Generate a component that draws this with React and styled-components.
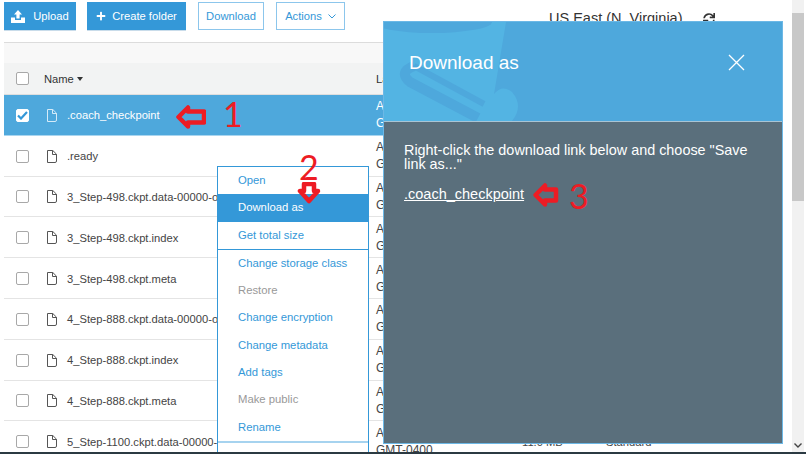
import React from 'react';
import styled, { createGlobalStyle } from 'styled-components';
import { FaPlus, FaSync } from 'react-icons/fa';

const GlobalStyle = createGlobalStyle`
  html, body {
    margin: 0;
    padding: 0;
    background: #fff;
    overflow: hidden;
  }
  * {
    box-sizing: border-box;
  }
`;

const blue = '#3498d8';
const rowBlue = '#4ea8dc';
const red = '#ed1c24';

const Page = styled.div`
  width: 806px;
  height: 454px;
  display: flex;
  flex-direction: column;
  font-family: 'Liberation Sans', Arial, sans-serif;
  font-size: 11.2px;
  color: #444;
`;

const Body = styled.div`
  flex: 1;
  min-height: 0;
  display: flex;
  position: relative;
  overflow: hidden;
`;

const BottomEdge = styled.div`
  height: 2px;
  background: #2b3a42;
`;

const Main = styled.div`
  width: 783px;
  padding-left: 4px;
`;

const Toolbar = styled.div`
  height: 43px;
  padding-top: 2px;
  display: flex;
  align-items: flex-start;
  border-bottom: 1px solid #dcdcdc;
`;

const ToolButton = styled.div`
  height: 28px;
  width: ${(p) => p.$width}px;
  margin-right: ${(p) => p.$gap}px;
  display: flex;
  align-items: center;
  justify-content: center;
  gap: ${(p) => p.$iconGap || 6}px;
  color: ${(p) => (p.$primary ? '#fff' : blue)};
  background: ${(p) => (p.$primary ? blue : '#fff')};
  border: ${(p) => (p.$primary ? 'none' : '1px solid #8cc6ec')};
  box-shadow: ${(p) => (p.$primary ? '0 1px 0 #c9dcea' : 'none')};
`;

const Region = styled.div`
  margin-left: 204px;
  padding-top: 8px;
  font-size: 14.5px;
  color: #333;
  white-space: nowrap;
  display: flex;
  align-items: flex-start;
  gap: 20px;
  svg {
    margin-top: 3px;
  }
`;

const FilterBand = styled.div`
  height: 20px;
  background: #f8f8f8;
`;

const HeaderRow = styled.div`
  height: 32px;
  display: grid;
  grid-template-columns: 40px 332px 146px 84px 1fr;
  align-items: center;
  background: #f2f3f3;
  border-bottom: 1px solid #dedede;
  color: #333;
`;

const Row = styled.div`
  height: 40.8px;
  padding-top: 1px;
  display: grid;
  grid-template-columns: 40px 332px 146px 84px 1fr;
  align-items: center;
  white-space: nowrap;
  overflow: hidden;
  color: ${(p) => (p.$selected ? '#fff' : '#444')};
  background: ${(p) => (p.$selected ? rowBlue : '#fff')};
  border-bottom: 1px solid ${(p) => (p.$selected ? '#a9d5ef' : '#e4e4e4')};
`;

const CheckCell = styled.div`
  padding-left: 12px;
  display: flex;
`;

const Check = styled.div`
  width: 13px;
  height: 13px;
  background: #fff;
  border: 1px solid ${(p) => (p.$on ? '#fff' : '#a8a8a8')};
  border-radius: 2px;
  display: flex;
  align-items: center;
  justify-content: center;
`;

const NameCell = styled.div`
  display: flex;
  align-items: center;
  gap: 10px;
  padding-left: 2px;
`;

const SortLabel = styled.div`
  display: flex;
  align-items: center;
  gap: 3px;
`;

const SortCaret = styled.span`
  width: 0;
  height: 0;
  border-left: 3.5px solid transparent;
  border-right: 3.5px solid transparent;
  border-top: 4px solid #333;
`;

const DateCell = styled.div`
  font-size: 12px;
  line-height: 17px;
`;

const Scrollbar = styled.div`
  margin-left: 9px;
  width: 12px;
  background: #f1f1f1;
  position: relative;
  display: flex;
  flex-direction: column;
  justify-content: space-between;
  align-items: center;
`;

const ScrollCap = styled.div`
  height: 13px;
  width: 100%;
  display: flex;
  align-items: center;
  justify-content: center;
`;

const ScrollThumb = styled.div`
  width: 100%;
  height: 188px;
  background: #c8c8c8;
`;

const ScrollTop = styled.div`
  display: flex;
  flex-direction: column;
  width: 100%;
`;

const Menu = styled.div`
  position: absolute;
  left: 217px;
  top: 166px;
  width: 152px;
  background: #fff;
  border: 1px solid ${blue};
  border-bottom: none;
`;

const MenuItem = styled.div`
  height: 27.3px;
  line-height: 27.6px;
  padding-left: 20px;
  font-size: 11.3px;
  color: ${(p) => (p.$active ? '#fff' : p.$disabled ? '#999' : blue)};
  background: ${(p) => (p.$active ? blue : 'transparent')};
`;

const MenuRule = styled.div`
  height: ${(p) => (p.$thick ? 2 : 1)}px;
  background: ${(p) => (p.$thick ? '#a6d3ef' : blue)};
`;

const Modal = styled.div`
  position: absolute;
  left: 383px;
  top: 21px;
  width: 400px;
  height: 423px;
  border: 1px solid #6cb8e6;
  background: #5a6f7c;
  display: flex;
  flex-direction: column;
`;

const ModalHead = styled.div`
  height: 100px;
  flex-shrink: 0;
  position: relative;
  overflow: hidden;
  background: ${rowBlue};
  border-bottom: 1px solid #a9c4d4;
  display: flex;
  align-items: center;
  justify-content: space-between;
  padding: 0 37px 18px 25px;
`;

const BucketArt = styled.svg`
  position: absolute;
  left: 0;
  top: 0;
`;

const ModalTitle = styled.div`
  position: relative;
  font-size: 19px;
  color: #fff;
`;

const CloseIcon = styled.svg`
  position: relative;
  display: block;
`;

const ModalBody = styled.div`
  padding: 21px 20px 0;
  font-size: 14.4px;
  line-height: 14px;
  color: #fff;
`;

const ModalLink = styled.div`
  margin-top: 16px;
  font-size: 14.5px;
  text-decoration: underline;
`;

const Pointer = styled.svg`
  position: absolute;
  left: ${(p) => p.$x}px;
  top: ${(p) => p.$y}px;
`;

const Mark = styled.div`
  position: absolute;
  left: ${(p) => p.$x}px;
  top: ${(p) => p.$y}px;
  font-family: Lato, sans-serif;
  font-size: 34px;
  line-height: 32px;
  color: ${red};
`;

const files = [
  '.coach_checkpoint',
  '.ready',
  '3_Step-498.ckpt.data-00000-of-00001',
  '3_Step-498.ckpt.index',
  '3_Step-498.ckpt.meta',
  '4_Step-888.ckpt.data-00000-of-00001',
  '4_Step-888.ckpt.index',
  '4_Step-888.ckpt.meta',
  '5_Step-1100.ckpt.data-00000-of-00001',
];

const menuGroups = [
  [{ label: 'Open' }, { label: 'Download as', active: true }, { label: 'Get total size' }],
  [
    { label: 'Change storage class' },
    { label: 'Restore', disabled: true },
    { label: 'Change encryption' },
    { label: 'Change metadata' },
    { label: 'Add tags' },
    { label: 'Make public', disabled: true },
    { label: 'Rename' },
  ],
  [{ label: 'Delete' }],
];

const UploadIcon = () => (
  <svg width="14" height="13" viewBox="0 0 14 13" fill="#fff">
    <path d="M7 0 L11 4.4 H8.6 V8.6 H5.4 V4.4 H3 Z" />
    <path d="M0 7.5 H4 V10 H10 V7.5 H14 V13 H0 Z" />
  </svg>
);

const FileIcon = ({ color }) => (
  <svg width="11" height="13" viewBox="0 0 11 13" fill="none" stroke={color} strokeWidth="1">
    <path d="M1.5 .5 H6.8 L10.5 4.2 V11 Q10.5 12.5 9 12.5 H1.5 Z" />
    <path d="M6.5 .5 V4.5 H10.5" />
  </svg>
);

const Tick = () => (
  <svg width="11" height="9" viewBox="0 0 11 9" fill="none" stroke={blue} strokeWidth="2.2">
    <path d="M1 4.5 L4 7.5 L10 1" />
  </svg>
);

// hollow red callout arrow, tail is how far the shaft runs to the right
const LeftArrow = ({ x, y, tail }) => (
  <Pointer $x={x} $y={y} width="31" height="26" viewBox="0 0 31 26" fill="none" stroke={red} strokeWidth="4.5">
    <path d={`M3.5 13 L13 3.5 V7.5 H${tail} V18.5 H13 V22.5 Z`} strokeLinejoin="round" />
  </Pointer>
);

const DownArrow = ({ x, y }) => (
  <Pointer $x={x} $y={y} width="26" height="22" viewBox="0 0 26 22" fill="none" stroke={red} strokeWidth="4.5">
    <path d="M8 2 H18 V9 H22 L13 19 L4 9 H8 Z" strokeLinejoin="round" />
  </Pointer>
);

const App = () => (
  <Page>
    <GlobalStyle />
    <Body>
      <Main>
        <Toolbar>
          <ToolButton $primary $width={72} $gap={11} $iconGap={8}>
            <UploadIcon />
            Upload
          </ToolButton>
          <ToolButton $primary $width={99} $gap={12}>
            <FaPlus size={10} />
            Create folder
          </ToolButton>
          <ToolButton $width={66} $gap={12}>Download</ToolButton>
          <ToolButton $width={69} $gap={0}>
            Actions
            <svg width="8" height="5" viewBox="0 0 8 5" fill="none" stroke={blue}>
              <path d="M.5 .5 L4 4 L7.5 .5" />
            </svg>
          </ToolButton>
          <Region>
            US East (N. Virginia)
            <FaSync size={12} color="#333" />
          </Region>
        </Toolbar>
        <FilterBand />
        <HeaderRow>
          <CheckCell><Check /></CheckCell>
          <SortLabel>Name <SortCaret /></SortLabel>
          <div>Last modified</div>
          <div>Size</div>
          <div>Storage class</div>
        </HeaderRow>
        {files.map((name, i) => (
          <Row key={name} $selected={i === 0}>
            <CheckCell>
              <Check $on={i === 0}>{i === 0 && <Tick />}</Check>
            </CheckCell>
            <NameCell>
              <FileIcon color={i === 0 ? '#d5ebf8' : '#555'} />
              {name}
            </NameCell>
            <DateCell>
              Aug 6, 2018 1:55:36 PM
              <br />
              GMT-0400
            </DateCell>
            <div>11.0 MB</div>
            <div>Standard</div>
          </Row>
        ))}
      </Main>
      <Scrollbar>
        <ScrollTop>
          <ScrollCap />
          <ScrollThumb />
        </ScrollTop>
        <ScrollCap>
          <svg width="8" height="5" viewBox="0 0 8 5" fill="none" stroke="#444" strokeWidth="1.4">
            <path d="M.5 .5 L4 4 L7.5 .5" />
          </svg>
        </ScrollCap>
      </Scrollbar>

      <Menu>
        {menuGroups.map((group, g) => (
          <React.Fragment key={g}>
            {g > 0 && <MenuRule $thick={g === 2} />}
            {group.map((item) => (
              <MenuItem key={item.label} $active={item.active} $disabled={item.disabled}>
                {item.label}
              </MenuItem>
            ))}
          </React.Fragment>
        ))}
      </Menu>

      <Modal>
        <ModalHead>
          <BucketArt width="398" height="99" viewBox="0 0 398 99">
            <path d="M0 0 H122 L110 72 Q118 62 128 70 Q140 84 128 99 H0 Z" fill="#53b4e3" />
            <ellipse cx="48" cy="0" rx="60" ry="11" fill={rowBlue} />
            <path d="M30 44 Q14 50 26 60 L94 96" fill="none" stroke={rowBlue} strokeWidth="10" />
            <path d="M30 44 L100 82" fill="none" stroke={rowBlue} strokeWidth="6" />
          </BucketArt>
          <ModalTitle>Download as</ModalTitle>
          <CloseIcon width="17" height="17" viewBox="0 0 17 17" stroke="#fff" strokeWidth="1.3">
            <path d="M1 1 L16 16 M16 1 L1 16" />
          </CloseIcon>
        </ModalHead>
        <ModalBody>
          Right-click the download link below and choose "Save link as..."
          <ModalLink>.coach_checkpoint</ModalLink>
        </ModalBody>
      </Modal>

      <LeftArrow x={175} y={104} tail={29} />
      <Mark $x={223} $y={98}>1</Mark>
      <DownArrow x={296} y={182} />
      <Mark $x={299} $y={151}>2</Mark>
      <LeftArrow x={532} y={182} tail={24} />
      <Mark $x={569} $y={180}>3</Mark>
    </Body>
    <BottomEdge />
  </Page>
);

export default App;
